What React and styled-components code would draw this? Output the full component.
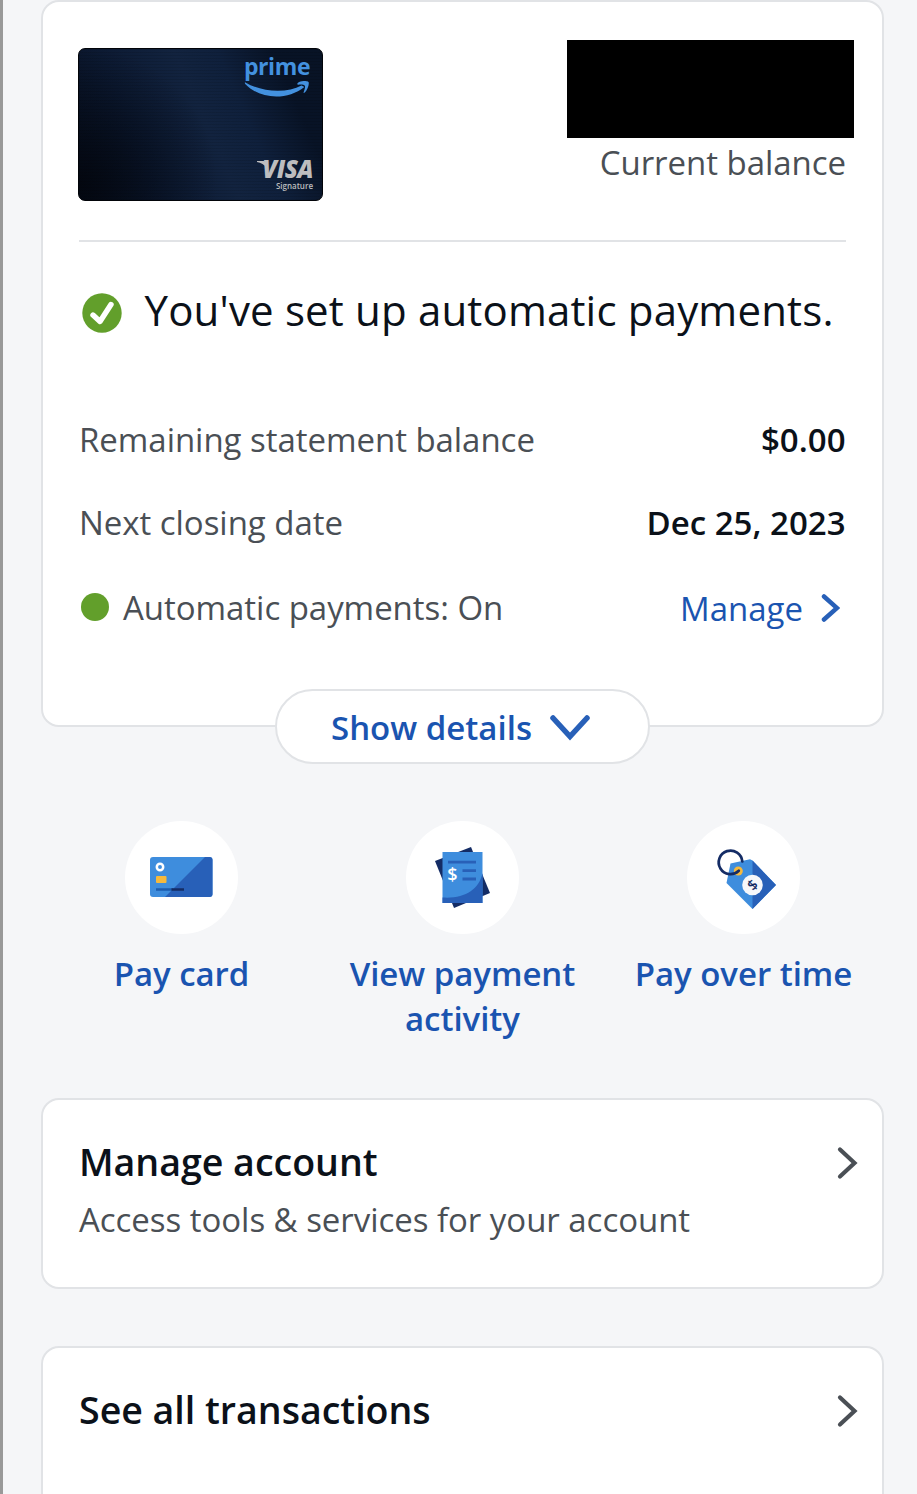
import React from 'react';
import styled, { createGlobalStyle } from 'styled-components';

const GlobalStyle = createGlobalStyle`
  * {
    box-sizing: border-box;
  }
  body {
    margin: 0;
    background: #f5f6f8;
    font-family: 'Open Sans', 'Noto Sans', sans-serif;
    color: #0b1119;
  }
`;

const Page = styled.main`
  height: 1494px;
  overflow: hidden;
  padding: 0 33px 0 38px;
  border-left: 3px solid #999;
`;

const Panel = styled.section`
  display: flex;
  flex-direction: column;
  background: #fff;
  border: 2px solid #e1e3e6;
  border-radius: 18px;
  padding: 0 36px;
`;

const BalancePanel = styled(Panel)`
  height: 727px;
`;

const CardHeader = styled.header`
  display: flex;
  justify-content: space-between;
  height: 240px;
  border-bottom: 2px solid #e1e3e6;
`;

const CreditCard = styled.div`
  display: flex;
  flex-direction: column;
  align-items: flex-end;
  justify-content: space-between;
  width: 245px;
  height: 153px;
  margin: 46px 0 0 -1px;
  padding: 3px 12px 9px;
  border: 1px solid #020409;
  border-radius: 7px;
  background:
    repeating-linear-gradient(0deg, rgba(0, 0, 0, 0.1) 0 1px, transparent 1px 3px),
    radial-gradient(circle at 0 90%, rgba(2, 5, 12, 0.8), transparent 50%),
    linear-gradient(66deg, #070f1f 0%, #0c1a33 28%, #12233f 52%, #0f203c 66%, #081326 84%, #081325 100%);
`;

const PrimeLogo = styled.div`
  width: 66px;
  display: flex;
  flex-direction: column;
  align-items: center;
  font-size: 23px;
  font-weight: 700;
  line-height: 28px;
  letter-spacing: -0.4px;
  color: #4391df;

  svg {
    display: block;
    margin-top: 1px;
  }
`;

const VisaLogo = styled.div`
  display: flex;
  flex-direction: column;
  align-items: flex-end;
  margin-right: -3px;
  color: #bdbdbf;
`;

const VisaName = styled.span`
  display: flex;
  font-size: 24px;
  font-weight: 800;
  font-style: italic;
  line-height: 24px;
  letter-spacing: -0.5px;

  svg {
    margin: 3.5px -5px 0 0;
  }
`;

const VisaTier = styled.span`
  font-size: 8px;
  font-weight: 600;
  line-height: 10px;
`;

const Balance = styled.div`
  display: flex;
  flex-direction: column;
  align-items: flex-end;
  margin: 38px -8px 0 0;
`;

const Redacted = styled.div`
  width: 287px;
  height: 98px;
  background: #000;
`;

const Label = styled.span`
  font-size: 33px;
  line-height: 48px;
  letter-spacing: -0.04px;
  color: #4a4f55;
  white-space: nowrap;
`;

const BalanceLabel = styled(Label)`
  margin: 1px 8px 0 0;
`;

const Notice = styled.div`
  display: flex;
  align-items: center;
  height: 60px;
  margin: 38px 0 76px;

  svg {
    margin: 6px 22.5px 0 3px;
    flex: none;
  }
`;

const NoticeText = styled.h1`
  margin: 0;
  font-size: 42px;
  font-weight: 400;
  line-height: 60px;
  letter-spacing: 0.17px;
  white-space: nowrap;
`;

const Row = styled.div`
  display: flex;
  justify-content: space-between;
  align-items: center;
  height: 48px;
  margin-bottom: ${({ $gap }) => $gap || 0}px;
`;

const Value = styled.span`
  font-size: 33px;
  font-weight: 600;
  line-height: 48px;
  padding-right: 0.5px;
`;

const Status = styled.div`
  display: flex;
  align-items: center;
  gap: 14px;
  padding-left: 2px;
`;

const Dot = styled.i`
  width: 28px;
  height: 28px;
  margin-top: -2px;
  border-radius: 50%;
  background: #629f2b;
`;

const ManageLink = styled.a`
  display: flex;
  align-items: center;
  gap: 18px;
  padding: 2px 6px 0 0;
  font-size: 33px;
  line-height: 48px;
  color: #1a54b0;

  svg {
    margin-top: -2px;
  }
`;

const DetailsButton = styled.button`
  display: flex;
  align-items: center;
  justify-content: center;
  gap: 18px;
  width: 375px;
  height: 75px;
  margin: -38px auto 0;
  padding: 3px 4px 0 0;
  border: 2px solid #e1e3e6;
  border-radius: 38px;
  background: #fff;
  font: 600 33px/48px 'Open Sans', sans-serif;
  color: #1a54b0;
  position: relative;
`;

const Actions = styled.nav`
  display: grid;
  grid-template-columns: repeat(3, 281px);
  height: 277px;
  margin-top: 57px;
`;

const Action = styled.a`
  display: flex;
  flex-direction: column;
  align-items: center;
  font-size: 33px;
  font-weight: 600;
  line-height: 45px;
  letter-spacing: -0.04px;
  text-align: center;
  color: #1a54b0;
`;

const ActionText = styled.span`
  max-width: 240px;
`;

const ActionIcon = styled.span`
  display: flex;
  width: 113px;
  height: 113px;
  margin-bottom: 17px;
  border-radius: 50%;
  background: #fff;
`;

const LinkPanel = styled(Panel)`
  flex-direction: row;
  justify-content: space-between;
  height: 191px;
  margin-bottom: 57px;
  padding: 37px 23px 0 36px;

  > svg {
    margin-top: 9px;
  }
`;

const PanelTitle = styled.h2`
  margin: 0 0 9px;
  font-size: 37.6px;
  font-weight: 600;
  line-height: 50px;
  letter-spacing: -0.03px;
`;

const Chevron = ({ width, height, d, color, stroke }) => (
  <svg width={width} height={height} viewBox={`0 0 ${width} ${height}`} fill="none">
    <path d={d} stroke={color} strokeWidth={stroke} strokeLinecap="round" />
  </svg>
);

const CheckIcon = () => (
  <svg width="40" height="40" viewBox="0 0 40 40">
    <circle cx="20" cy="20" r="19.7" fill="#629f2b" />
    <path d="M11 22L18 28.5L29 11.5" fill="none" stroke="#fff" strokeWidth="5.4" strokeLinecap="round" strokeLinejoin="round" />
  </svg>
);

const Smile = () => (
  <svg width="66" height="16" viewBox="0 0 66 16" fill="#4391df">
    <path d="M1.4 1.4C18 11.5 43 12.5 57.5 4.6L60.4 6C43 19.8 16 18.5 1.2 3C.5 2 .8 1 1.4 1.4Z" />
    <path d="M54 1.8C57-.5 63-.5 64.6 1C65.5 4 63.2 9 60.8 11.6C59.9 12.4 59.2 12 59.7 11C60.8 8 61.6 5.2 60.6 4.4C59.4 3.5 57 3.3 54.2 3.8C53 3.9 53.1 2.5 54 1.8Z" />
  </svg>
);

const PayCardIcon = () => (
  <svg width="113" height="113" viewBox="0 0 113 113">
    <rect x="25" y="36" width="62.5" height="40" rx="3" fill="#3e8ddd" />
    <path d="M80 36H84.5Q87.5 36 87.5 39V73Q87.5 76 84.5 76H40Z" fill="#2860b8" />
    <circle cx="35" cy="46" r="3.2" fill="none" stroke="#fff" strokeWidth="2.5" />
    <rect x="31" y="55" width="10.5" height="7" rx="1" fill="#f5b93d" />
    <path d="M31 68.5H48" stroke="#1d5cae" strokeWidth="2.5" />
    <path d="M46.5 68.5H59" stroke="#142c65" strokeWidth="2.5" />
  </svg>
);

const ActivityIcon = () => (
  <svg width="113" height="113" viewBox="0 0 113 113">
    <path d="M29 40L65 26L84 72L48 87Z" fill="#142c65" />
    <path d="M36.5 31H76.5V82H36.5Z" fill="#3e8ddd" />
    <path d="M76.5 52C73 69 58 78 36.5 76.5V82H76.5Z" fill="#2860b8" />
    <path d="M42 41.2H70M56.5 49.7H70M56.5 58H70" stroke="#2860b8" strokeWidth="2.8" />
    <text x="46.3" y="60" fontSize="18" fontWeight="600" textAnchor="middle" fill="#fff">$</text>
  </svg>
);

const TagIcon = () => (
  <svg width="113" height="113" viewBox="0 0 113 113">
    <path d="M43.5 42.5L63 38.3L65.5 39.5L89 64L65.5 88L39.5 62Z" fill="#3e8ddd" />
    <path d="M65.5 39.5L89 64L65.5 88Z" fill="#2860b8" />
    <circle cx="51.3" cy="50" r="4.5" fill="#f5b93d" />
    <path d="M51.8 49.8A11.8 11.8 0 1 1 55.3 40.5" fill="none" stroke="#142c65" strokeWidth="2.7" strokeLinecap="round" />
    <circle cx="65.5" cy="64" r="10.3" fill="#f6f7fa" />
    <text x="65.5" y="69.2" fontSize="14.5" fontWeight="600" textAnchor="middle" fill="#142c65" transform="rotate(-45 65.5 64)">$</text>
  </svg>
);

const actions = [
  { label: 'Pay card', Icon: PayCardIcon },
  { label: 'View payment activity', Icon: ActivityIcon },
  { label: 'Pay over time', Icon: TagIcon },
];

const links = [
  { title: 'Manage account', text: 'Access tools & services for your account' },
  { title: 'See all transactions' },
];

const App = () => {
  return (
    <Page>
      <GlobalStyle />
      <BalancePanel>
        <CardHeader>
          <CreditCard>
            <PrimeLogo>
              prime
              <Smile />
            </PrimeLogo>
            <VisaLogo>
              <VisaName>
                <svg width="10" height="7" viewBox="0 0 10 7" fill="currentColor">
                  <path d="M0 0H7Q9 0 9.5 2.5L10 7Q6 2 0 1Z" />
                </svg>
                VISA
              </VisaName>
              <VisaTier>Signature</VisaTier>
            </VisaLogo>
          </CreditCard>
          <Balance>
            <Redacted />
            <BalanceLabel>Current balance</BalanceLabel>
          </Balance>
        </CardHeader>
        <Notice>
          <CheckIcon />
          <NoticeText>You've set up automatic payments.</NoticeText>
        </Notice>
        <Row $gap={35}>
          <Label>Remaining statement balance</Label>
          <Value>$0.00</Value>
        </Row>
        <Row $gap={37}>
          <Label>Next closing date</Label>
          <Value>Dec 25, 2023</Value>
        </Row>
        <Row>
          <Status>
            <Dot />
            <Label>Automatic payments: On</Label>
          </Status>
          <ManageLink>
            Manage
            <Chevron width={19} height={28} d="M3 2.5L16 14L3 25.5" color="#2860b8" stroke={4.5} />
          </ManageLink>
        </Row>
      </BalancePanel>
      <DetailsButton>
        Show details
        <Chevron width={40} height={26} d="M3 3L20 21.5L37 3" color="#2860b8" stroke={5.5} />
      </DetailsButton>
      <Actions>
        {actions.map(({ label, Icon }) => (
          <Action key={label}>
            <ActionIcon>
              <Icon />
            </ActionIcon>
            <ActionText>{label}</ActionText>
          </Action>
        ))}
      </Actions>
      {links.map(({ title, text }) => (
        <LinkPanel key={title}>
          <div>
            <PanelTitle>{title}</PanelTitle>
            {text && <Label>{text}</Label>}
          </div>
          <Chevron width={22} height={34} d="M3 3.5L17.5 17L3 30.5" color="#4a4f55" stroke={4.2} />
        </LinkPanel>
      ))}
    </Page>
  );
};

export default App;
